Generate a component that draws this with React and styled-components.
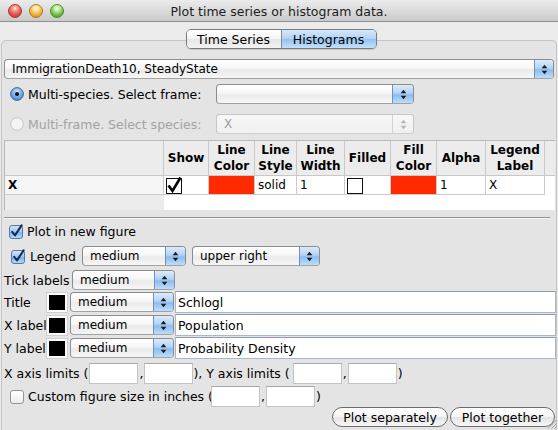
import React from 'react';
import styled, { createGlobalStyle } from 'styled-components';

const Global = createGlobalStyle`
  html, body { margin: 0; padding: 0; }
  body {
    width: 558px; height: 430px; overflow: hidden;
    background: #e9e9e9;
    font-family: "DejaVu Sans", "Lucida Grande", sans-serif;
    font-size: 12px; color: #000;
  }
`;

const Window = styled.div`
  position: relative;
  width: 558px; height: 430px;
  display: flex; flex-direction: column;
  background: #ebebeb;
  overflow: hidden;
`;

const TitleBar = styled.div`
  flex: none; height: 22px; box-sizing: border-box;
  display: grid; grid-template-columns: 1fr auto 1fr; align-items: center;
  background: linear-gradient(#ececec, #dadada 55%, #c9c9c9);
  border-bottom: 1px solid #8f8f8f;
  font-size: 12.5px;
`;

const Lights = styled.div`
  display: flex; gap: 7px; padding-left: 8px; align-items: center;
`;

const Light = styled.span`
  width: 14px; height: 14px; border-radius: 50%; box-sizing: border-box;
  border: 1px solid ${p => p.$edge};
  background: radial-gradient(circle at 50% 28%, #ffffff 0, ${p => p.$light} 22%, ${p => p.$mid} 60%, ${p => p.$dark} 100%);
`;

const TitleText = styled.div`
  color: #1c1c1c;
  padding-top: 1px;
`;

const TabStrip = styled.div`
  position: relative; z-index: 1;
  align-self: center;
  margin: 7px 0 -9px 4px;
  display: flex; height: 20px;
  border: 1px solid #7b7b7b; border-radius: 5px; overflow: hidden; box-sizing: border-box;
  box-shadow: 0 1px 1px rgba(0,0,0,0.12);
`;

const Tab = styled.div`
  width: ${p => p.$w}px; box-sizing: border-box;
  display: flex; align-items: center; justify-content: center;
  font-size: 12.5px;
  background: ${p => p.$active
    ? 'linear-gradient(#d6e8fb, #b2d3f6 48%, #93c3f1 52%, #c4e1fb)'
    : 'linear-gradient(#ffffff, #f4f4f4 48%, #e6e6e6 52%, #f3f3f3)'};
  & + & { border-left: 1px solid #8a8a8a; }
`;

const Panel = styled.div`
  flex: 1;
  margin: 0 1px;
  border: 1px solid #c4c4c4; border-bottom: none;
  border-radius: 5px 5px 0 0;
  background: #e4e4e4;
  padding: 18px 2px 0 2px;
  display: flex; flex-direction: column;
`;

const Combo = styled.div`
  box-sizing: border-box;
  flex: ${p => (p.$w ? 'none' : '1')};
  width: ${p => (p.$w ? p.$w + 'px' : 'auto')};
  height: 20px;
  display: flex; align-items: stretch;
  border: 1px solid ${p => (p.$disabled ? '#c6c6c6' : '#8c8c8c')};
  border-bottom-color: ${p => (p.$disabled ? '#cfcfcf' : '#a2a2a2')};
  border-radius: 4px;
  overflow: hidden;
  background: ${p => (p.$disabled
    ? 'linear-gradient(#f7f7f7, #f0f0f0)'
    : 'linear-gradient(#ffffff, #f6f6f6 45%, #eaeaea 55%, #f6f6f6)')};
  color: ${p => (p.$disabled ? '#9c9c9c' : '#000')};
`;

const ComboText = styled.span`
  flex: 1; min-width: 0;
  display: flex; align-items: center;
  padding-left: ${p => p.$pad || 7}px;
  white-space: nowrap; overflow: hidden;
`;

const Stepper = styled.span`
  flex: none; width: ${p => p.$w || 19}px;
  display: flex; align-items: center; justify-content: center;
  border-left: 1px solid ${p => (p.$disabled ? '#d2d2d2' : '#6f93bd')};
  background: ${p => (p.$disabled
    ? 'linear-gradient(#f8f8f8, #efefef)'
    : 'linear-gradient(#dcebfb, #b2d3f5 45%, #8bbcef 55%, #bcdefc)')};
`;

const Arrows = ({ disabled }) => (
  <svg width="7" height="11" viewBox="0 0 7 11">
    <path d="M3.5 0.8 L6.3 4.2 L0.7 4.2 Z" fill={disabled ? '#b5b5b5' : '#1b1b1b'} />
    <path d="M0.7 6.8 L6.3 6.8 L3.5 10.2 Z" fill={disabled ? '#b5b5b5' : '#1b1b1b'} />
  </svg>
);

const Select = ({ w, text, disabled, stepW, pad }) => (
  <Combo $w={w} $disabled={disabled}>
    <ComboText $pad={pad}>{text}</ComboText>
    <Stepper $disabled={disabled} $w={stepW}><Arrows disabled={disabled} /></Stepper>
  </Combo>
);

const Row = styled.div`
  flex: none;
  display: flex; align-items: center;
  height: ${p => p.$h || 20}px;
  margin-top: ${p => p.$mt || 0}px;
  padding-left: ${p => p.$pl || 0}px;
  gap: ${p => p.$gap || 0}px;
  white-space: nowrap;
`;

const RadioLabel = styled.label`
  width: ${p => p.$w}px; flex: none;
  display: flex; align-items: center; gap: 4px;
  color: ${p => (p.$disabled ? '#a3a3a3' : '#000')};
  font-size: 12.5px;
`;

const Radio = ({ on, disabled }) => (
  <svg width="14" height="14" viewBox="0 0 14 14">
    <defs>
      <radialGradient id="rb" cx="50%" cy="35%" r="65%">
        <stop offset="0" stopColor="#e4f1fd" />
        <stop offset="0.5" stopColor="#7fb4ec" />
        <stop offset="1" stopColor="#3f83d6" />
      </radialGradient>
    </defs>
    {on ? (
      <>
        <circle cx="7" cy="7" r="6.4" fill="url(#rb)" stroke="#3d5f8c" strokeWidth="0.9" />
        <circle cx="7" cy="7" r="2.1" fill="#111" />
      </>
    ) : (
      <circle cx="7" cy="7" r="6.3" fill={disabled ? '#f4f4f4' : '#fff'} stroke={disabled ? '#c2c2c2' : '#888'} strokeWidth="0.9" />
    )}
  </svg>
);

const AquaCheck = ({ on }) => (
  <svg width="15" height="15" viewBox="0 0 15 15">
    <defs>
      <linearGradient id="cb" x1="0" y1="0" x2="0" y2="1">
        <stop offset="0" stopColor="#d8e9fb" />
        <stop offset="0.5" stopColor="#9ac6f2" />
        <stop offset="0.55" stopColor="#7db3ec" />
        <stop offset="1" stopColor="#b8dcfb" />
      </linearGradient>
      <linearGradient id="cw" x1="0" y1="0" x2="0" y2="1">
        <stop offset="0" stopColor="#ffffff" />
        <stop offset="1" stopColor="#ececec" />
      </linearGradient>
    </defs>
    <rect x="0.5" y="1.5" width="13" height="13" rx="2.5"
      fill={on ? 'url(#cb)' : 'url(#cw)'} stroke={on ? '#4b6c97' : '#8a8a8a'} strokeWidth="0.9" />
    {on && <path d="M3.2 7.8 L6 11.4 L12.6 1.4" fill="none" stroke="#172a4a" strokeWidth="2" strokeLinecap="round" strokeLinejoin="round" />}
  </svg>
);

const TableGrid = styled.div`
  flex: none;
  margin-top: 6px;
  margin-right: -1px;
  height: 70px; box-sizing: border-box;
  display: grid;
  grid-template-columns: 159px 45px 46px 42px 48px 46px 46px 49px 59px 1fr;
  grid-template-rows: 35px 19px 1fr;
  border-top: 1px solid #b9b9b9; border-left: 1px solid #b9b9b9;
  background: #fff;
`;

const Head = styled.div`
  box-sizing: border-box;
  background: #ececec;
  border-right: ${p => (p.$noline ? 'none' : '1px solid #c8c8c8')};
  border-bottom: 1px solid #c8c8c8;
  display: flex; align-items: center; justify-content: center; text-align: center;
  font-weight: bold; line-height: 16px; font-size: 12px;
`;

const Cell = styled.div`
  box-sizing: border-box;
  border-right: 1px solid #cbcbcb; border-bottom: 1px solid #cbcbcb;
  background: ${p => p.$bg || '#fff'};
  display: flex; align-items: center;
  padding-left: ${p => p.$pl ?? 3}px;
  font-weight: ${p => (p.$bold ? 'bold' : 'normal')};
`;

const Filler = styled.div`
  background: ${p => p.$bg};
  grid-column: ${p => p.$col};
`;

const BoxCheck = ({ on }) => (
  <svg width="17" height="17" viewBox="0 0 17 17" style={{ overflow: 'visible' }}>
    <rect x="0.5" y="1.5" width="15" height="15" fill="#fff" stroke="#111" strokeWidth="1" />
    {on && <path d="M2.5 8.5 L6.5 14 L14.5 0.5" fill="none" stroke="#000" strokeWidth="2.6" strokeLinejoin="miter" />}
  </svg>
);

const Separator = styled.div`
  flex: none;
  margin: 7px 4px 0 0;
  height: 1px;
  background: #929292;
  box-shadow: 0 1px 0 #f4f4f4;
`;

const Label = styled.span`
  flex: none;
  width: ${p => (p.$w ? p.$w + 'px' : 'auto')};
  margin: 0 ${p => p.$mr ?? p.$mx ?? 0}px 0 ${p => p.$mx || 0}px;
  font-size: 12.5px;
`;

const Swatch = styled.div`
  flex: none;
  width: 22px; height: 21px; box-sizing: border-box;
  background: #fbfbfb;
  border: 1px solid #cfcfcf;
  padding: 2px 2px 2px 2px;
  margin-right: 2px;
  & > span { display: block; width: 100%; height: 100%; background: #000; }
`;

const TextField = styled.div`
  box-sizing: border-box;
  flex: ${p => (p.$w ? 'none' : '1')};
  width: ${p => (p.$w ? p.$w + 'px' : 'auto')};
  height: ${p => p.$h || 22}px;
  margin-left: ${p => p.$ml || 0}px;
  margin-right: ${p => p.$mr || 0}px;
  background: #fff;
  border: 1px solid ${p => (p.$blue ? '#a9b7c8' : '#c3c3c3')};
  border-top-color: ${p => (p.$blue ? '#8d9cb0' : '#a9a9a9')};
  display: flex; align-items: center; padding-left: 2px;
  font-size: 12.5px;
`;

const ButtonRow = styled.div`
  flex: none;
  margin-top: 1px; margin-right: -1px;
  display: flex; justify-content: flex-end; gap: 2px;
  height: 20px;
`;

const PillButton = styled.button`
  width: ${p => p.$w}px; height: 20px; box-sizing: border-box;
  padding: 0;
  border: 1px solid #6c6c6c; border-radius: 10px;
  background: linear-gradient(#ffffff, #f5f5f5 48%, #e4e4e4 52%, #f7f7f7);
  font-family: inherit; font-size: 12.5px; color: #000;
`;

const Grip = styled.svg`
  position: absolute; right: 1px; bottom: 1px;
`;

export default function App() {
  return (
    <Window>
      <Global />
      <TitleBar>
        <Lights>
          <Light $edge="#a33a36" $light="#ff9a92" $mid="#e4514a" $dark="#b8302b" />
          <Light $edge="#a8782a" $light="#ffe39a" $mid="#f3b13d" $dark="#c47f19" />
          <Light $edge="#4e8a33" $light="#c8f2a0" $mid="#70c148" $dark="#3c8e25" />
        </Lights>
        <TitleText>Plot time series or histogram data.</TitleText>
        <div />
      </TitleBar>

      <TabStrip>
        <Tab $w={94}>Time Series</Tab>
        <Tab $w={95} $active>Histograms</Tab>
      </TabStrip>

      <Panel>
        <Row>
          <Select text="ImmigrationDeath10, SteadyState" stepW={18} />
        </Row>

        <Row $mt={5} $pl={6}>
          <RadioLabel $w={206}><Radio on />Multi-species. Select frame:</RadioLabel>
          <Select w={198} text="" stepW={20} />
        </Row>

        <Row $mt={10} $pl={6}>
          <RadioLabel $w={206} $disabled><Radio disabled />Multi-frame. Select species:</RadioLabel>
          <Select w={198} text="X" disabled stepW={20} />
        </Row>

        <TableGrid>
          <Head />
          <Head>Show</Head>
          <Head>Line<br />Color</Head>
          <Head>Line<br />Style</Head>
          <Head>Line<br />Width</Head>
          <Head>Filled</Head>
          <Head>Fill<br />Color</Head>
          <Head>Alpha</Head>
          <Head>Legend<br />Label</Head>
          <Head $noline />

          <Cell $bold $bg="#f5f5f5">X</Cell>
          <Cell $pl={2}><BoxCheck on /></Cell>
          <Cell $bg="#ff2a00" />
          <Cell>solid</Cell>
          <Cell>1</Cell>
          <Cell $pl={2}><BoxCheck /></Cell>
          <Cell $bg="#ff2a00" />
          <Cell>1</Cell>
          <Cell>X</Cell>
          <Filler $bg="#fff" />

          <Filler $bg="#ececec" $col="1" />
          <Filler $bg="#fff" $col="2 / -1" />
        </TableGrid>

        <Separator />

        <Row $mt={5} $h={16} $pl={5} $gap={3}>
          <AquaCheck on />
          <Label>Plot in new figure</Label>
        </Row>

        <Row $mt={7} $pl={7}>
          <AquaCheck on />
          <Label $w={52} style={{ paddingLeft: 4 }}>Legend</Label>
          <Select w={104} text="medium" />
          <span style={{ width: 6 }} />
          <Select w={128} text="upper right" />
        </Row>

        <Row $mt={4}>
          <Label $w={68}>Tick labels</Label>
          <Select w={103} text="medium" />
        </Row>

        <Row $mt={1} $h={22}>
          <Label $w={42}>Title</Label>
          <Swatch><span /></Swatch>
          <Select w={104} text="medium" />
          <TextField $blue $ml={1} $mr={-2}>Schlogl</TextField>
        </Row>

        <Row $mt={1} $h={22}>
          <Label $w={42}>X label</Label>
          <Swatch><span /></Swatch>
          <Select w={104} text="medium" />
          <TextField $blue $ml={1} $mr={-2}>Population</TextField>
        </Row>

        <Row $mt={1} $h={22}>
          <Label $w={42}>Y label</Label>
          <Swatch><span /></Swatch>
          <Select w={104} text="medium" />
          <TextField $blue $ml={1} $mr={-2}>Probability Density</TextField>
        </Row>

        <Row $mt={3} $h={22}>
          <Label>X axis limits (</Label>
          <TextField $w={49} $h={21} $ml={1} />
          <Label $mx={1}>,</Label>
          <TextField $w={49} $h={21} />
          <Label $mr={3}>), Y axis limits (</Label>
          <TextField $w={49} $h={21} />
          <Label $mx={1}>,</Label>
          <TextField $w={49} $h={21} />
          <Label $mx={1}>)</Label>
        </Row>

        <Row $mt={2} $pl={6}>
          <AquaCheck />
          <Label style={{ paddingLeft: 3 }}>Custom figure size in inches (</Label>
          <TextField $w={49} $h={21} $ml={-2} />
          <Label $mx={1}>,</Label>
          <TextField $w={49} $h={21} />
          <Label $mx={1}>)</Label>
        </Row>

        <ButtonRow>
          <PillButton $w={116}>Plot separately</PillButton>
          <PillButton $w={105}>Plot together</PillButton>
        </ButtonRow>
      </Panel>

      <Grip width="10" height="10" viewBox="0 0 10 10">
        <path d="M9.5 1 L1 9.5 M9.5 4.5 L4.5 9.5 M9.5 7.5 L7.5 9.5" stroke="#9a9a9a" strokeWidth="1" />
      </Grip>
    </Window>
  );
}
